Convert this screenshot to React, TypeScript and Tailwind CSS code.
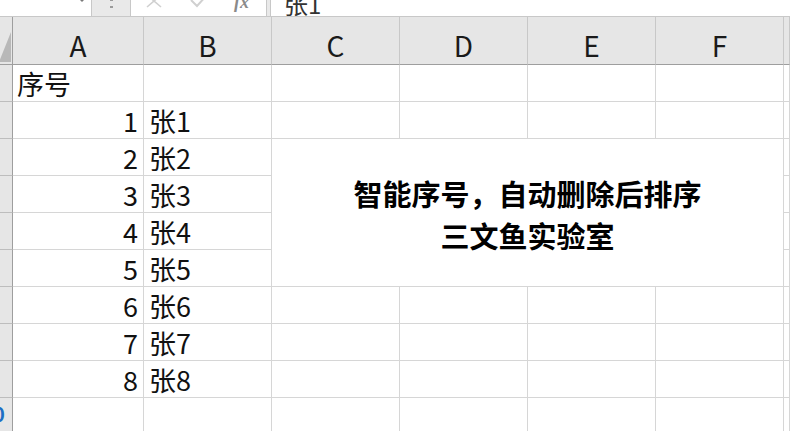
import React from 'react';

const cols = ['A', 'B', 'C', 'D', 'E', 'F', ''];
const font = { fontFamily: '"Noto Sans CJK SC", "Liberation Sans", sans-serif' };

type Row = { a?: string; b?: string };
const rows: Row[] = [
  { a: '序号' },
  { a: '1', b: '张1' },
  { a: '2', b: '张2' },
  { a: '3', b: '张3' },
  { a: '4', b: '张4' },
  { a: '5', b: '张5' },
  { a: '6', b: '张6' },
  { a: '7', b: '张7' },
  { a: '8', b: '张8' },
  {},
];

function TopBar() {
  return (
    <div className="h-[17px] overflow-hidden bg-[#e9e9e9] border-b border-[#c8c8c8] relative flex">
      <div className="w-[92px] h-full bg-white border-r border-[#c8c8c8] relative">
        <svg className="absolute left-[77px] -top-[3px]" width="10" height="8" viewBox="0 0 10 8">
          <path d="M1 1 L5 5 L9 1 Z" fill="#7a7a7a" />
        </svg>
      </div>
      <div className="w-[38px] h-full flex justify-center">
        <div className="w-[3px] h-[9px] flex flex-col justify-between -mt-[1px]">
          <span className="block w-[3px] h-[2px] bg-[#9a9a9a]" />
          <span className="block w-[3px] h-[2px] bg-[#9a9a9a]" />
        </div>
      </div>
      <div className="w-[137px] h-full bg-white border-x border-[#c8c8c8] relative">
        <svg className="absolute left-[14px] -top-[6px]" width="18" height="14" viewBox="0 0 18 14">
          <path d="M2 1 L16 13 M16 1 L2 13" stroke="#d0d0d0" strokeWidth="1.6" />
        </svg>
        <svg className="absolute left-[58px] -top-[5px]" width="20" height="14" viewBox="0 0 20 14">
          <path d="M2 5 L8 11 L18 0" stroke="#d0d0d0" strokeWidth="2" fill="none" />
        </svg>
        <span className="absolute left-[103px] -top-[11px] text-[18px] italic font-bold text-[#8a8a8a]" style={{ fontFamily: '"Liberation Serif", serif' }}>
          fx
        </span>
      </div>
      <div className="w-[3px]" />
      <div className="flex-1 h-full bg-white border-l border-[#c8c8c8] relative">
        <span className="absolute left-[13px] -top-[14px] text-[24px] text-[#333]" style={font}>
          张1
        </span>
      </div>
    </div>
  );
}

function Corner() {
  return (
    <div className="bg-[#e6e6e6] border-r border-b border-[#9e9e9e] relative overflow-hidden">
      <svg className="absolute right-[1px] bottom-[2px]" width="12" height="30" viewBox="0 0 12 30">
        <path d="M12 0 L12 30 L0 30 Z" fill="#b8b8b8" />
      </svg>
    </div>
  );
}

export default function App() {
  return (
    <div className="w-[790px] h-[431px] overflow-hidden bg-white text-[#111]" style={font}>
      <TopBar />
      <div className="grid grid-cols-[13px_131px_128px_128px_128px_128px_128px_1fr] grid-rows-[48px_repeat(10,37px)]">
        <Corner />
        {cols.map((c, i) => (
          <div
            key={'h' + i}
            className="bg-[#e6e6e6] border-b border-[#9e9e9e] border-r border-r-[#c8c8c8] flex items-end justify-center pb-[1px] text-[28px] leading-[36px] text-[#1a1a1a]"
          >
            {c}
          </div>
        ))}
        {rows.map((r, ri) => (
          <React.Fragment key={'r' + ri}>
            <div className="bg-[#e6e6e6] border-r border-[#9e9e9e] border-b border-b-[#bdbdbd] relative overflow-hidden">
              {ri === 9 && (
                <span className="absolute -left-[7px] top-[4px] text-[20px] leading-[24px] text-[#1e6fc4] font-bold">0</span>
              )}
            </div>
            <div className="border-r border-b border-[#d6d6d6] flex items-end justify-end pr-[5px] text-[27px] leading-[35px] overflow-hidden">
              {ri === 0 ? <span className="mr-auto pl-[4px]">{r.a}</span> : r.a}
            </div>
            <div className="border-r border-b border-[#d6d6d6] flex items-end pl-[5px] text-[27px] leading-[35px]">
              {r.b}
            </div>
            {ri === 2 && (
              <div className="col-span-4 row-span-4 border-r border-b border-[#d6d6d6] flex flex-col items-center justify-center pt-[2px] text-[29px] leading-[42px] font-bold text-black">
                <span>智能序号，自动删除后排序</span>
                <span>三文鱼实验室</span>
              </div>
            )}
            {(ri < 2 || ri > 5) &&
              [0, 1, 2, 3].map((k) => <div key={'c' + k} className="border-r border-b border-[#d6d6d6]" />)}
            <div className="border-r border-b border-[#d6d6d6]" />
          </React.Fragment>
        ))}
      </div>
    </div>
  );
}
